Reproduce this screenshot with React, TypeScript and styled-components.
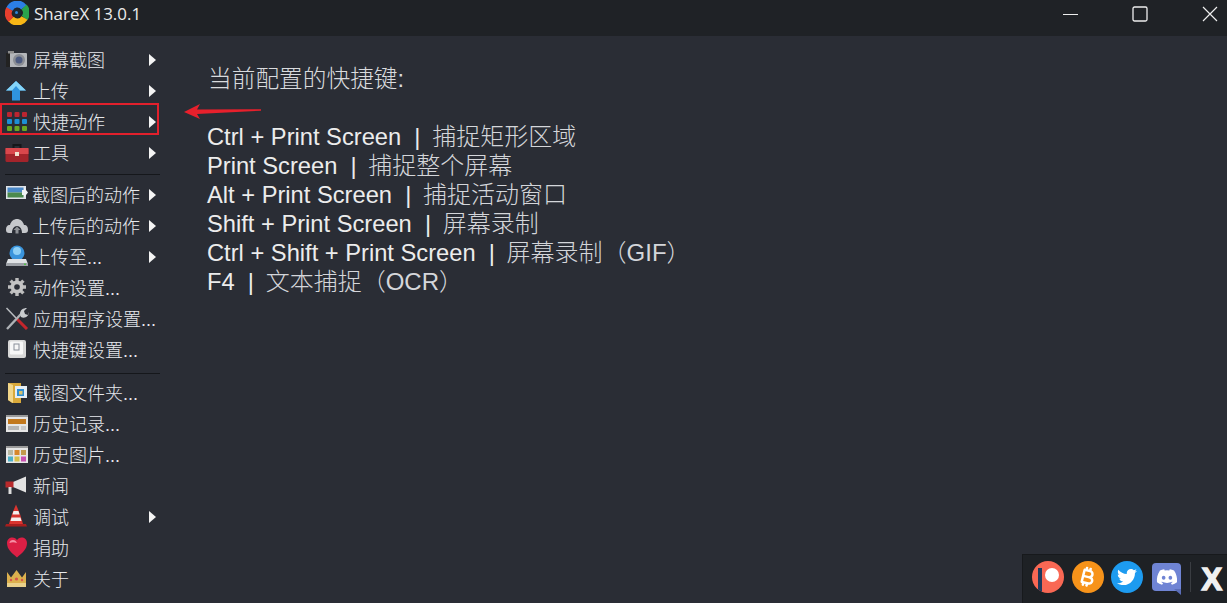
import React from "react";
import styled, { createGlobalStyle } from "styled-components";
import { FaBitcoinSign, FaTwitter, FaDiscord } from "react-icons/fa6";

const Global = createGlobalStyle`
  html, body { margin: 0; padding: 0; height: 100%; background: #2a2d35; overflow: hidden; }
  #root { height: 100%; }
`;

const FONT = `"Liberation Sans", "Noto Sans CJK SC", sans-serif`;

const Page = styled.div`
  position: relative;
  width: 1227px;
  height: 603px;
  display: flex;
  flex-direction: column;
  background: #2a2d35;
  color: #e8e8e8;
  font-family: ${FONT};
  overflow: hidden;
`;
const TitleBar = styled.header`
  height: 36px;
  flex: none;
  display: flex;
  align-items: flex-start;
  background: #1f2226;
  padding-left: 5px;
`;
const LogoMark = styled.svg`
  margin-top: 1px;
  flex: none;
`;
const TitleText = styled.span`
  font-family: "Open Sans", sans-serif;
  font-size: 16.9px;
  line-height: 23px;
  margin: 2px 0 0 5px;
  color: #ececec;
`;
const WindowControls = styled.div`
  margin-left: auto;
  display: flex;
  height: 100%;
  align-items: flex-start;
  gap: 54px;
  padding-right: 9px;
`;
const WindowButton = styled.button`
  width: 16px;
  height: 27px;
  border: 0;
  padding: 0;
  background: none;
  display: flex;
  align-items: center;
  justify-content: center;
  color: #eee;
`;
const Body = styled.div`
  flex: 1;
  display: flex;
  min-height: 0;
`;
const Sidebar = styled.nav`
  width: 159px;
  flex: none;
  margin-left: 1px;
  padding-top: 7px;
  display: flex;
  flex-direction: column;
`;
const Row = styled.div<{ $active?: boolean }>`
  height: 31px;
  flex: none;
  box-sizing: border-box;
  display: flex;
  align-items: center;
  padding-left: 4px;
  margin-right: 2px;
  font-size: 18px;
  font-weight: 300;
  white-space: nowrap;
  position: relative;
  color: #e6e8ec;
  ${(p) =>
    p.$active &&
    `&::after {
      content: "";
      position: absolute;
      top: -2px;
      bottom: 1px;
      left: -1px;
      right: -1px;
      border: 2px solid #e2202c;
    }`}
`;
const IconBox = styled.span<{ $tight?: boolean }>`
  width: 24px;
  height: 24px;
  flex: none;
  display: block;
  margin-right: ${(p) => (p.$tight ? 3 : 4)}px;
`;
const Arrow = styled.span`
  position: absolute;
  left: 148px;
  top: 50%;
  margin-top: -5px;
  width: 0;
  height: 0;
  border-left: 7px solid #f4f4f4;
  border-top: 6px solid transparent;
  border-bottom: 6px solid transparent;
`;
const Separator = styled.hr<{ $before: number; $after: number }>`
  border: 0;
  height: 1px;
  background: #15171b;
  margin: ${(p) => p.$before}px 0 ${(p) => p.$after}px 4px;
  width: 155px;
  flex: none;
`;
const Content = styled.main`
  flex: 1;
  padding: 29px 0 0 47px;
  font-size: 23.7px;
  font-weight: 300;
  line-height: 29px;
  color: #ececec;
`;
const ContentTitle = styled.p`
  margin: 0 0 28px 1px;
  height: 29px;
  color: #d9dbde;
`;
const Line = styled.div`
  white-space: pre;
  height: 29px;
`;
const Cjk = styled.span`
  color: #d4d6da;
  font-size: 24px;
  margin-left: -1.5px;
`;
const CallOut = styled.svg`
  position: absolute;
  left: 182px;
  top: 100px;
`;
const SocialPanel = styled.aside`
  position: absolute;
  right: 0;
  bottom: 0;
  width: 205px;
  height: 49px;
  box-sizing: border-box;
  background: #1e2125;
  border: 1px solid #17191c;
  border-right: 0;
  border-bottom: 0;
  display: flex;
  align-items: center;
  padding: 0 0 5px 9px;
  gap: 7.5px;
`;
const RoundBadge = styled.span<{ $bg: string }>`
  width: 32px;
  height: 32px;
  border-radius: 50%;
  background: ${(p) => p.$bg};
  display: flex;
  align-items: center;
  justify-content: center;
  color: #fff;
  flex: none;
  position: relative;
  overflow: hidden;
`;
const PatreonBar = styled.i`
  position: absolute;
  left: 6px;
  top: 7px;
  width: 3.5px;
  height: 25px;
  background: #1d3a5c;
`;
const PatreonDot = styled.i`
  position: absolute;
  left: 12.5px;
  top: 7px;
  width: 14.5px;
  height: 14.5px;
  border-radius: 50%;
  background: #fff;
`;
const DiscordBox = styled.span`
  width: 29px;
  height: 28px;
  margin-left: 1.5px;
  position: relative;
  background: #6f84d4;
  border-radius: 4px 4px 2px 4px;
  display: flex;
  align-items: center;
  justify-content: center;
  color: #fff;
  flex: none;
`;
const DiscordTail = styled.i`
  position: absolute;
  right: 0;
  bottom: -4px;
  border-top: 6px solid #5b6eb8;
  border-left: 7px solid transparent;
`;
const PanelDivider = styled.i`
  width: 1px;
  height: 30px;
  background: #3a3d42;
  margin-left: 1.5px;
  flex: none;
`;
const XMark = styled.span`
  font-family: "Liberation Sans", sans-serif;
  font-weight: 700;
  font-size: 31px;
  line-height: 1;
  color: #f0f0f0;
  -webkit-text-stroke: 1.4px #f0f0f0;
  margin: 5px 0 0 3px;
`;

const S: React.FC<{ children: React.ReactNode; tight?: boolean }> = ({ children, tight }) => (
  <IconBox $tight={tight}>
    <svg width="24" height="24" viewBox="0 0 24 24">{children}</svg>
  </IconBox>
);

const Logo = () => (
  <LogoMark width="24" height="24" viewBox="0 0 24 24" fill="none">
    <path d="M4.500 8.500A8.300 8.300 0 0 1 19 6.500" stroke="#2c7fe6" strokeWidth="7" />
    <path d="M19 6a8.300 8.300 0 0 1 0.500 11" stroke="#2aa44c" strokeWidth="7" />
    <path d="M19.500 17a8.300 8.300 0 0 1-13.500 1" stroke="#f7b716" strokeWidth="7" />
    <path d="M6 18.500A8.300 8.300 0 0 1 4.500 8" stroke="#e63f2e" strokeWidth="7" />
    <circle cx="12" cy="12" r="4" fill="#1c2733" />
    <circle cx="11.500" cy="11.500" r="1.500" fill="#2f86d8" />
  </LogoMark>
);

const Camera = () => (
  <S>
    <rect x="1" y="6" width="21" height="14" rx="1" fill="#b4b6ba" />
    <rect x="1" y="6" width="4" height="14" fill="#222" />
    <rect x="3" y="4" width="6" height="2.500" fill="#8d8d8d" />
    <circle cx="14" cy="13" r="6" fill="#8a8d94" />
    <circle cx="14" cy="13" r="3.500" fill="#4c5a80" />
  </S>
);
const Up = () => (
  <S>
    <path d="M11 3 21 12.500h-6v10H7v-10H1z" fill="#2f93dd" />
    <path d="M11 3 21 12.500h-6L11 8l-4 4.500H1z" fill="#84d4f8" />
  </S>
);
const Grid = () => {
  const cols = [2, 9.5, 17];
  const rows: [number, string][] = [[3, "#bb2530"], [10, "#1c8fd6"], [17, "#6aa823"]];
  return (
    <S>
      {rows.map(([y, c]) =>
        cols.map((x) => <rect key={`${x}-${y}`} x={x} y={y} width="5" height="5" rx="1" fill={c} />)
      )}
    </S>
  );
};
const Toolbox = () => (
  <S>
    <path d="M7.500 8V4h9v4h-2V6h-5v2z" fill="#15171a" />
    <rect x="0.500" y="8" width="23" height="14" rx="1.500" fill="#a3242b" />
    <rect x="0.500" y="8" width="23" height="6" fill="#d9474c" />
    <rect x="10" y="12" width="4" height="4" fill="#f2e1d0" />
  </S>
);
const ImageOut = () => (
  <S tight>
    <rect x="1" y="4" width="20" height="13" fill="#dfe3e8" />
    <rect x="2.500" y="5.500" width="16" height="5" fill="#4a88c8" />
    <rect x="2.500" y="10.500" width="16" height="5" fill="#4c8a4e" />
    <path d="M17 8h2V5.500l4 5-4 5V13h-2z" fill="#f0f3f5" />
  </S>
);
const Cloud = () => (
  <S tight>
    <path d="M1 17c0-3 1-5 4-5 1-4 4-6 7-6s6 2 7 6c3 0 4 2 4 5 0 2-1 3-3 3h-3c0-4-2-7-5-7s-5 3-5 7H4c-2 0-3-1-3-3z" fill="#c6c8cc" />
    <path d="M8.500 17l3.500-3.500 3.500 3.500h-2v3.500h-3V17z" fill="#8f9297" />
  </S>
);
const Disk = () => (
  <S>
    <circle cx="12" cy="9" r="7.500" fill="#3a94dc" />
    <circle cx="12" cy="7" r="4" fill="#8fd0f6" />
    <path d="M3 15h18l2 5H1z" fill="#dfe2e5" />
    <rect x="1" y="19" width="22" height="3" fill="#9ca0a6" />
    <rect x="19" y="19.500" width="2" height="1.500" fill="#53c04a" />
  </S>
);
const Gear = () => (
  <S>
    <g stroke="#bdbdbd" strokeWidth="3.400">
      <path d="M12 3v18M3 12h18M5.600 5.600l12.800 12.800M18.400 5.600 5.600 18.400" />
    </g>
    <circle cx="12" cy="12" r="6.500" fill="#c4c4c4" />
    <circle cx="12" cy="12" r="2.800" fill="#2a2d35" />
  </S>
);
const Tools = () => (
  <S>
    <path d="M1.500 2 11 12" stroke="#b9bcc0" strokeWidth="1.500" />
    <path d="M11 12l11 11" stroke="#c5262c" strokeWidth="3" />
    <path d="M2 23 16 8" stroke="#aeb2b6" strokeWidth="2.400" />
    <path d="M15 8c0-4 3-6 7-6l-3 3 1 3 3 1 1-3c0 4-4 7-8 5z" fill="#c9cccf" />
  </S>
);
const KeyCap = () => (
  <S>
    <rect x="3" y="3" width="18" height="18" rx="2" fill="#d8d8d8" />
    <rect x="5" y="4.500" width="13" height="13" rx="1" fill="#f7f7f7" />
    <rect x="9" y="7" width="5" height="6" fill="none" stroke="#8a8f99" strokeWidth="1" />
  </S>
);
const Folder = () => (
  <S>
    <path d="M3 3h13v20L7 23 3 20z" fill="#d9a93a" />
    <path d="M3 3l5 2v18l-5-3z" fill="#f1d68a" />
    <rect x="10" y="6" width="12" height="12" fill="#e6eef5" />
    <rect x="12" y="9" width="7" height="7" fill="#2f8fd3" />
    <rect x="14" y="11" width="3.500" height="3.500" fill="#d7c26e" />
  </S>
);
const History = () => (
  <S>
    <rect x="1" y="4" width="22" height="17" fill="#e6e6e6" />
    <rect x="1" y="4" width="22" height="2" fill="#9a9a9a" />
    <rect x="3" y="8" width="18" height="5" fill="#c2781d" />
    <rect x="3" y="15" width="11" height="4" fill="#b5b5b5" />
    <rect x="16" y="15" width="5" height="4" fill="#c9c9c9" />
  </S>
);
const Gallery = () => (
  <S>
    <rect x="1" y="4" width="22" height="17" fill="#e6e6e6" />
    <rect x="1" y="4" width="22" height="2" fill="#9a9a9a" />
    <rect x="3" y="8" width="5" height="5" fill="#b9b9a4" />
    <rect x="9.500" y="8" width="5" height="5" fill="#d8872a" />
    <rect x="16" y="8" width="5" height="5" fill="#c29a4c" />
    <rect x="3" y="14.500" width="5" height="5" fill="#4db0c8" />
    <rect x="9.500" y="14.500" width="5" height="5" fill="#d8c04a" />
    <rect x="16" y="14.500" width="5" height="5" fill="#c850b0" />
  </S>
);
const Megaphone = () => (
  <S>
    <path d="M8 9 21 3.500v16L8 14z" fill="#e2e2e2" />
    <rect x="0.500" y="8.500" width="8" height="6" fill="#b92a2c" />
    <path d="M3.500 14h3v7h-3z" fill="#ddd" />
  </S>
);
const Cone = () => (
  <S>
    <path d="M11 0.500 15 10l3 10H4l3-10z" fill="#d9342f" />
    <path d="M8.500 7h5l1 3.500h-7zM6.500 13.500h9l1 3.500H5.500z" fill="#f4eeee" />
    <path d="M1 20h20l1 2.500H0z" fill="#a71e1e" />
  </S>
);
const Heart = () => (
  <S>
    <path d="M12 22.500C7 18 2 14.500 2 8c0-3.500 2.500-5.500 5.500-5.500 2 0 3.500 1 4.500 2.700 1-1.700 2.500-2.700 4.500-2.700 3 0 5.500 2 5.500 5.500 0 6.500-5 10-10 14.500z" fill="#dc1f45" />
    <path d="M4.500 8c0-2 1.500-3 3.500-3s3 1 4 3c-3-1-5-1-7.500 0z" fill="#f78fa5" />
  </S>
);
const Crown = () => (
  <S>
    <path d="M2 6l4 5.500L11.500 4l5.500 7.500L21 6v15H2z" fill="#dcb04e" />
    <rect x="2" y="17" width="19" height="4" fill="#e9d08a" />
    <circle cx="11.500" cy="13" r="1.600" fill="#d6544c" />
    <circle cx="6" cy="14" r="1.200" fill="#d6544c" />
    <circle cx="17" cy="14" r="1.200" fill="#d6544c" />
  </S>
);

type Item = { label: string; icon: React.ReactNode; sub?: boolean; active?: boolean };

const groupA: Item[] = [
  { label: "屏幕截图", icon: <Camera />, sub: true },
  { label: "上传", icon: <Up />, sub: true },
  { label: "快捷动作", icon: <Grid />, sub: true, active: true },
  { label: "工具", icon: <Toolbox />, sub: true },
];
const groupB: Item[] = [
  { label: "截图后的动作", icon: <ImageOut />, sub: true },
  { label: "上传后的动作", icon: <Cloud />, sub: true },
  { label: "上传至...", icon: <Disk />, sub: true },
  { label: "动作设置...", icon: <Gear /> },
  { label: "应用程序设置...", icon: <Tools /> },
  { label: "快捷键设置...", icon: <KeyCap /> },
];
const groupC: Item[] = [
  { label: "截图文件夹...", icon: <Folder /> },
  { label: "历史记录...", icon: <History /> },
  { label: "历史图片...", icon: <Gallery /> },
  { label: "新闻", icon: <Megaphone /> },
  { label: "调试", icon: <Cone />, sub: true },
  { label: "捐助", icon: <Heart /> },
  { label: "关于", icon: <Crown /> },
];

const Rows = ({ items }: { items: Item[] }) => (
  <>
    {items.map((it) => (
      <Row key={it.label} $active={it.active}>
        {it.icon}
        {it.label}
        {it.sub && <Arrow />}
      </Row>
    ))}
  </>
);

const shortcuts: [string, string][] = [
  ["Ctrl + Print Screen", "捕捉矩形区域"],
  ["Print Screen", "捕捉整个屏幕"],
  ["Alt + Print Screen", "捕捉活动窗口"],
  ["Shift + Print Screen", "屏幕录制"],
  ["Ctrl + Shift + Print Screen", "屏幕录制（GIF）"],
  ["F4", "文本捕捉（OCR）"],
];

export default function App() {
  return (
    <Page>
      <Global />
      <TitleBar>
        <Logo />
        <TitleText>ShareX 13.0.1</TitleText>
        <WindowControls>
          <WindowButton aria-label="最小化">
            <svg width="16" height="16" viewBox="0 0 16 16"><path d="M1 8.500h15" stroke="currentColor" strokeWidth="1" /></svg>
          </WindowButton>
          <WindowButton aria-label="最大化">
            <svg width="16" height="16" viewBox="0 0 16 16"><rect x="1" y="1" width="14" height="14" rx="1.500" fill="none" stroke="currentColor" strokeWidth="1.300" /></svg>
          </WindowButton>
          <WindowButton aria-label="关闭">
            <svg width="16" height="16" viewBox="0 0 16 16"><path d="M1 1l14 14M15 1 1 15" stroke="currentColor" strokeWidth="1.200" /></svg>
          </WindowButton>
        </WindowControls>
      </TitleBar>
      <Body>
        <Sidebar>
          <Rows items={groupA} />
          <Separator $before={7} $after={3} />
          <Rows items={groupB} />
          <Separator $before={9} $after={2} />
          <Rows items={groupC} />
        </Sidebar>
        <Content>
          <ContentTitle>当前配置的快捷键:</ContentTitle>
          {shortcuts.map(([k, v]) => (
            <Line key={k}>
              {k}  |  <Cjk>{v}</Cjk>
            </Line>
          ))}
        </Content>
      </Body>
      <CallOut width="82" height="22" viewBox="0 0 82 22">
        <path d="M2 12 18 4 15 9.500 79 9.300 79 10.700 15 14 18 19z" fill="#e8202c" />
      </CallOut>
      <SocialPanel>
        <RoundBadge $bg="#f96854">
          <PatreonBar />
          <PatreonDot />
        </RoundBadge>
        <RoundBadge $bg="#f7931a">
          <FaBitcoinSign size={20} style={{ transform: "rotate(14deg)" }} />
        </RoundBadge>
        <RoundBadge $bg="#1d9bf0">
          <FaTwitter size={20} />
        </RoundBadge>
        <DiscordBox>
          <FaDiscord size={22} />
          <DiscordTail />
        </DiscordBox>
        <PanelDivider />
        <XMark>X</XMark>
      </SocialPanel>
    </Page>
  );
}
